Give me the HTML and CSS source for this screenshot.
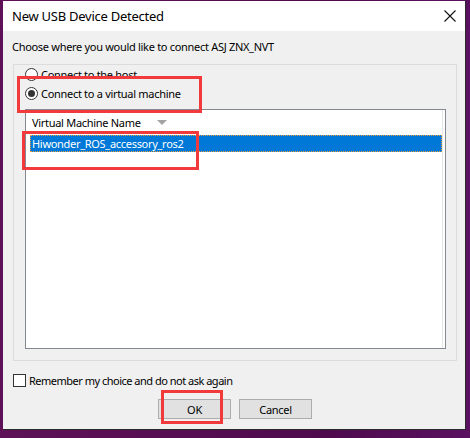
FILE: index.html
```html
<!DOCTYPE html>
<html>
<head>
<meta charset="utf-8">
<link rel="stylesheet" href="styles.css">
</head>
<body>
<div class="window">
  <div class="titlebar">
    <span class="title">New USB Device Detected</span>
    <svg class="close" width="12" height="12" viewBox="0 0 12 12"><path d="M0.5 0.5 L11.5 11.5 M11.5 0.5 L0.5 11.5" stroke="#111" stroke-width="1.1" fill="none"/></svg>
  </div>
  <div class="content">
    <div class="prompt">Choose where you would like to connect ASJ ZNX_NVT</div>
    <div class="group">
      <label class="radio-row"><span class="radio"></span><span>Connect to the host</span></label>
      <label class="radio-row"><span class="radio checked"></span><span>Connect to a virtual machine</span></label>
      <div class="listview">
        <div class="list-inner">
          <div class="list-header"><span>Virtual Machine Name</span><span class="sort-arrow"></span></div>
          <div class="list-row selected">Hiwonder_ROS_accessory_ros2</div>
        </div>
      </div>
    </div>
    <label class="check-row"><span class="checkbox"></span><span class="check-label">Remember my choice and do not ask again</span></label>
    <div class="buttons">
      <div class="btn">OK</div>
      <div class="btn">Cancel</div>
    </div>
  </div>
</div>
<div class="mark mark-radio"></div>
<div class="mark mark-row"></div>
<div class="mark mark-ok"></div>
</body>
</html>
```
FILE: styles.css
```css
html, body {
  margin: 0;
  padding: 0;
}
body {
  width: 470px;
  height: 438px;
  overflow: hidden;
  position: relative;
  background: linear-gradient(90deg, #5e1156 0%, #560d52 40%, #4d0a4c 70%, #5a1160 100%);
  font-family: "Noto Sans", "Open Sans", sans-serif;
  color: #000;
  font-size: 11px;
  letter-spacing: -0.3px;
}
.window {
  margin: 1px 0 0 3px;
  width: 462px;
  height: 428px;
  border-right: 1px solid #2a2a2a;
  border-bottom: 1px solid #2a2a2a;
  background: #f0f0f0;
  display: flex;
  flex-direction: column;
}
.titlebar {
  height: 30px;
  background: #fff;
  display: flex;
  align-items: center;
  justify-content: space-between;
  padding: 0 9px 0 9px;
  flex: none;
}
.title {
  font-size: 13px;
  letter-spacing: -0.25px;
  margin-top: -1px;
}
.close {
  margin-top: -1px;
}
.content {
  padding: 0 0 0 10px;
  display: flex;
  flex-direction: column;
}
.prompt {
  margin: 8px 0 0 -1px;
  line-height: 16px;
  height: 16px;
}
.group {
  margin-top: 9px;
  width: 444px;
  height: 297px;
  border: 1px solid #dcdcdc;
  display: flex;
  flex-direction: column;
  padding: 0 0 0 11px;
  box-sizing: border-box;
}
.radio-row {
  display: flex;
  align-items: center;
  height: 19px;
}
.radio {
  width: 11px;
  height: 11px;
  border: 1px solid #333;
  border-radius: 50%;
  background: #fff;
  margin-right: 3px;
  position: relative;
  flex: none;
}
.radio.checked::after {
  content: "";
  position: absolute;
  left: 2px;
  top: 2px;
  width: 7px;
  height: 7px;
  border-radius: 50%;
  background: #333;
}
.listview {
  margin-top: 6px;
  width: 421px;
  height: 240px;
  border: 1px solid #848890;
  background: #fff;
  box-sizing: border-box;
  padding: 0 2px 0 4px;
}
.list-inner {
  height: 100%;
  border-right: 1px solid #e6e6e6;
}
.list-header {
  height: 24px;
  display: flex;
  align-items: center;
  padding-left: 2px;
}
.sort-arrow {
  width: 0;
  height: 0;
  border-left: 5px solid transparent;
  border-right: 5px solid transparent;
  border-top: 5px solid #a4a4a4;
  margin-left: 16px;
  margin-top: 1px;
}
.list-row {
  margin-top: 1px;
  height: 17px;
  line-height: 17px;
  padding-left: 2px;
}
.list-row.selected {
  background: #0078d7;
  color: #fff;
  outline: 1px dotted #e8a040;
  outline-offset: -1px;
}
.check-row {
  display: flex;
  align-items: center;
  margin-top: 11px;
  height: 16px;
}
.check-label {
  letter-spacing: -0.5px;
}
.checkbox {
  width: 11px;
  height: 11px;
  border: 1px solid #333;
  background: #fff;
  margin-right: 3px;
  flex: none;
}
.buttons {
  display: flex;
  gap: 8px;
  margin: 11px 0 0 145px;
}
.btn {
  width: 71px;
  height: 18px;
  border: 1px solid #adadad;
  background: #e1e1e1;
  display: flex;
  align-items: center;
  justify-content: center;
}
.mark {
  position: absolute;
  border: 3px solid #f2393b;
  box-sizing: border-box;
}
.mark-radio {
  left: 17px;
  top: 76px;
  width: 185px;
  height: 37px;
}
.mark-row {
  left: 22px;
  top: 131px;
  width: 177px;
  height: 39px;
}
.mark-ok {
  left: 161px;
  top: 390px;
  width: 62px;
  height: 34px;
}
```
